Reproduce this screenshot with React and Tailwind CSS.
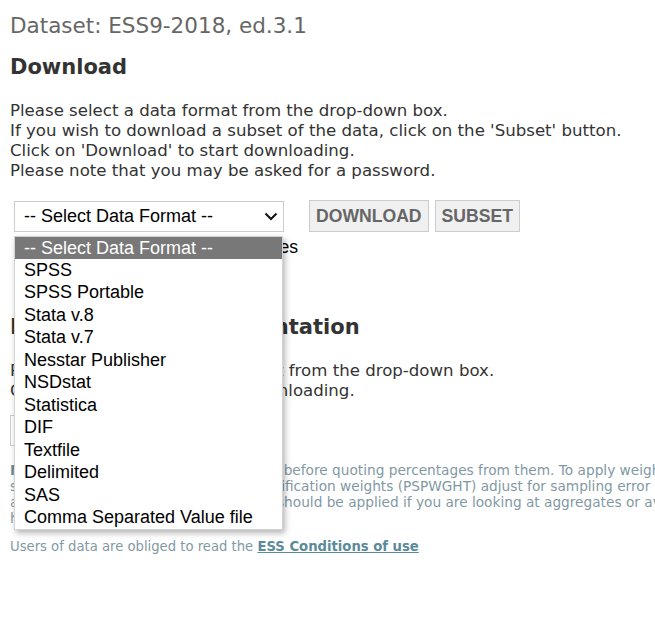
import React from "react";

const formats = [
  "SPSS",
  "SPSS Portable",
  "Stata v.8",
  "Stata v.7",
  "Nesstar Publisher",
  "NSDstat",
  "Statistica",
  "DIF",
  "Textfile",
  "Delimited",
  "SAS",
  "Comma Separated Value file",
];

const Chevron = () => (
  <svg width="14" height="9" viewBox="0 0 14 9" fill="none" className="shrink-0">
    <path d="M1.5 1.5 L7 7 L12.5 1.5" stroke="#111" strokeWidth="2" />
  </svg>
);

const App = () => {
  return (
    <div className="relative w-[655px] h-[639px] overflow-hidden bg-white font-['DejaVu_Sans',Verdana,sans-serif] text-[#333]">
      <div className="w-[900px] pl-[10px]">
        {/* Dataset title */}
        <h2 className="pt-[12px] text-[21.5px] leading-[28px] text-[#666]">Dataset: ESS9-2018, ed.3.1</h2>
        <h3 className="mt-[13px] text-[21px] leading-[28px] font-bold text-[#333]">Download</h3>

        <p className="mt-[20px] text-[16.6px] leading-[20px]">
          Please select a data format from the drop-down box.
          <br />
          If you wish to download a subset of the data, click on the 'Subset' button.
          <br />
          Click on 'Download' to start downloading.
          <br />
          Please note that you may be asked for a password.
        </p>

        {/* Format form */}
        <div className="mt-[19px] flex h-[32px] items-center pl-[4px]">
          <div className="flex h-[31px] w-[270px] items-center justify-between border border-[#ccc] bg-white pl-[9px] pr-[5px] font-['Liberation_Sans',Arial,sans-serif] text-[18px] text-black">
            <span>-- Select Data Format --</span>
            <Chevron />
          </div>
          <button className="ml-[25px] h-[32px] border border-[#ccc] bg-[#eff0ef] px-[6px] font-['Liberation_Sans',Arial,sans-serif] text-[17.6px] font-bold text-[#666]">
            DOWNLOAD
          </button>
          <button className="ml-[6px] h-[32px] border border-[#ccc] bg-[#eff0ef] px-[6px] font-['Liberation_Sans',Arial,sans-serif] text-[17.6px] font-bold text-[#666]">
            SUBSET
          </button>
        </div>

        <label className="mt-[4px] flex h-[22px] items-center gap-[5px] pl-[12px] font-['Liberation_Sans',Arial,sans-serif] text-[17.6px] text-black">
          <input type="checkbox" className="h-[13px] w-[13px]" />
          <span>Include country specific variables</span>
        </label>

        <h3 className="mt-[55px] text-[21px] leading-[28px] font-bold text-[#333]">Download the documentation</h3>

        <p className="mt-[20px] text-[16.6px] leading-[20px]">
          Please select a document format from the drop-down box.
          <br />
          Click on 'Download' to start downloading.
        </p>

        <div className="mt-[14px] h-[31px] w-[200px] border border-[#ccc] bg-white" />

        {/* Weighting note */}
        <p className="mt-[16px] whitespace-nowrap text-[13.7px] leading-[16px] text-[#8299a4]">
          <b className="text-[#6f8b96]">Note:</b> Data should always be weighted before quoting percentages from them. To apply weights, see the ESS guide.
          <br />
          so the data is representative. Post-stratification weights (PSPWGHT) adjust for sampling error and non-response bias.
          <br />
          and non-response bias. These weights should be applied if you are looking at aggregates or averages across countries.
          <br />
          have to be used as well.
        </p>

        <p className="mt-[13px] text-[13.2px] leading-[16px] text-[#8299a4]">
          Users of data are obliged to read the{" "}
          <a href="#" className="font-bold text-[#5b8a99] underline">ESS Conditions of use</a>
        </p>
      </div>

      {/* Open select list */}
      <ul className="absolute left-[14px] top-[236px] w-[269px] border border-[#d4d4d4] bg-white font-['Liberation_Sans',Arial,sans-serif] text-[18px] text-black shadow-[2px_3px_6px_rgba(0,0,0,0.3)]">
        <li className="flex h-[22px] items-center bg-[#787878] pl-[9px] text-white">-- Select Data Format --</li>
        {formats.map((f) => (
          <li key={f} className="flex h-[22.5px] items-center pl-[9px]">
            {f}
          </li>
        ))}
      </ul>
    </div>
  );
};

export default App;
